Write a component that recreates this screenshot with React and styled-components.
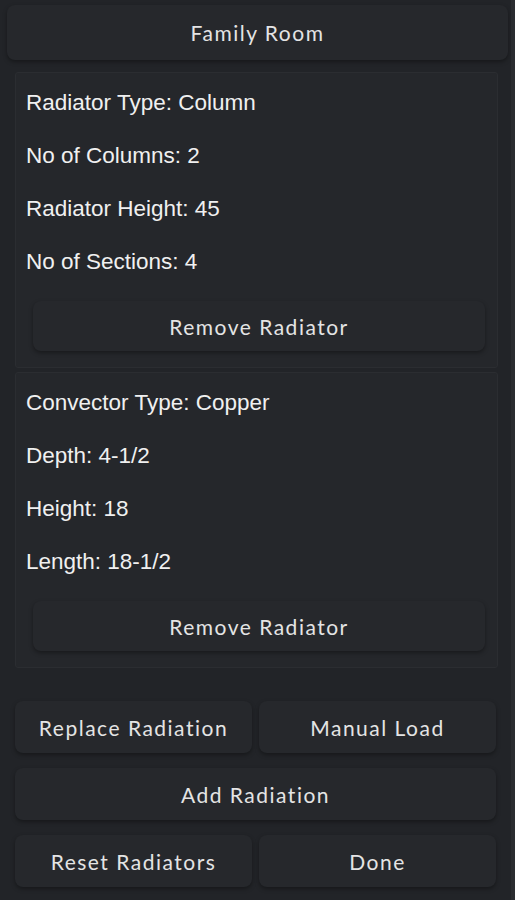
import React from 'react';
import styled, { createGlobalStyle } from 'styled-components';

const GlobalStyle = createGlobalStyle`
  html, body {
    margin: 0;
    padding: 0;
    background: #222428;
  }
  body {
    font-family: "Liberation Sans", Arial, sans-serif;
  }
`;

const radiators = [
  {
    id: 1,
    fields: [
      'Radiator Type: Column',
      'No of Columns: 2',
      'Radiator Height: 45',
      'No of Sections: 4',
    ],
  },
  {
    id: 2,
    fields: [
      'Convector Type: Copper',
      'Depth: 4-1/2',
      'Height: 18',
      'Length: 18-1/2',
    ],
  },
];

function App() {
  return (
    <>
      <GlobalStyle />
      <Page>
        <RoomButton>Family Room</RoomButton>
        <CardList>
          {radiators.map(r => (
            <Card key={r.id}>
              {r.fields.map(f => (
                <Field key={f}>{f}</Field>
              ))}
              <RemoveButton>Remove Radiator</RemoveButton>
            </Card>
          ))}
        </CardList>
        <Actions>
          <ActionRow>
            <ActionButton>Replace Radiation</ActionButton>
            <ActionButton>Manual Load</ActionButton>
          </ActionRow>
          <ActionButton>Add Radiation</ActionButton>
          <ActionRow>
            <ActionButton>Reset Radiators</ActionButton>
            <ActionButton>Done</ActionButton>
          </ActionRow>
        </Actions>
      </Page>
    </>
  );
}

export default App;

const Page = styled.div`
  width: 515px;
  height: 900px;
  box-sizing: border-box;
  padding: 5px 3px 0 7px;
  background: #222428;
  border-right: 4px solid #2a2c30;
  display: flex;
  flex-direction: column;
`;

const buttonFont = `
  font-family: Lato, "Open Sans", sans-serif;
  font-size: 21px;
  color: #e4e4e4;
  letter-spacing: 1.5px;
`;

const RoomButton = styled.div`
  ${buttonFont}
  height: 55px;
  display: flex;
  align-items: center;
  justify-content: center;
  background: #26282c;
  border-radius: 8px;
  box-shadow: 0 2px 4px rgba(0, 0, 0, 0.35);
`;

const CardList = styled.div`
  display: flex;
  flex-direction: column;
  gap: 4px;
  margin: 12px 10px 0 8px;
`;

const Card = styled.div`
  height: 296px;
  box-sizing: border-box;
  padding: 9px 0 12px 10px;
  background: #25272b;
  border: 1px solid #2b2d31;
  border-radius: 3px;
  display: flex;
  flex-direction: column;
`;

const Field = styled.div`
  height: 53px;
  display: flex;
  align-items: center;
  font-size: 22.5px;
  color: #f0f0f0;
  margin-top: -6px;
  margin-bottom: 6px;
`;

const RemoveButton = styled.div`
  ${buttonFont}
  margin: 7px 12px 0 7px;
  height: 50px;
  display: flex;
  align-items: center;
  justify-content: center;
  background: #26282c;
  border-radius: 8px;
  box-shadow: 0 2px 4px rgba(0, 0, 0, 0.35);
`;

const Actions = styled.div`
  margin: 33px 12px 0 8px;
  display: flex;
  flex-direction: column;
  gap: 15px;
`;

const ActionRow = styled.div`
  display: grid;
  grid-template-columns: 1fr 1fr;
  gap: 7px;
`;

const ActionButton = styled.div`
  ${buttonFont}
  height: 52px;
  display: flex;
  align-items: center;
  justify-content: center;
  background: #26282c;
  border-radius: 8px;
  box-shadow: 0 2px 4px rgba(0, 0, 0, 0.35);
`;
